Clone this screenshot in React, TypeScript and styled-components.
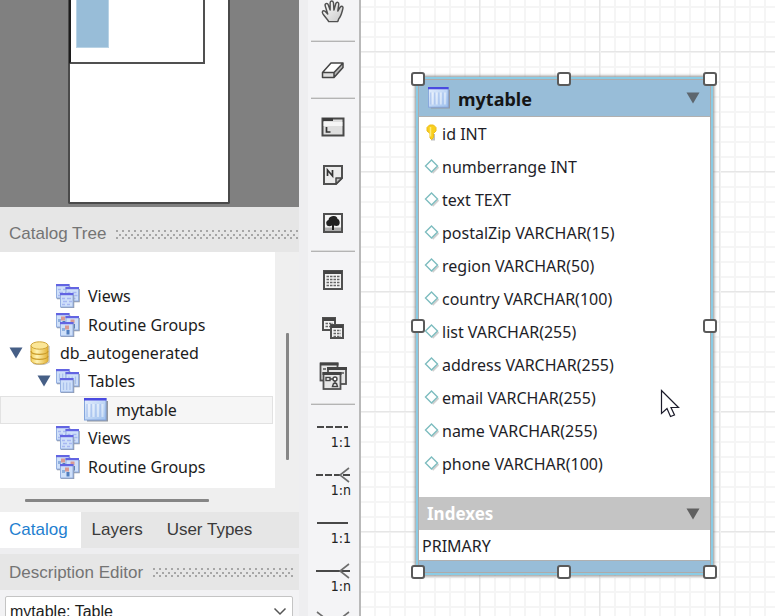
import React from "react";
import styled, { createGlobalStyle, css } from "styled-components";

const uiFont = '"Liberation Sans", Arial, sans-serif';
const treeFont = '"Noto Sans", Tahoma, sans-serif';

const GlobalStyle = createGlobalStyle`
  *, *::before, *::after { box-sizing: border-box; }
  body { margin: 0; background: #eeeef0; font-family: ${uiFont}; font-size: 17px; color: #1c1c1c; }
  ul { margin: 0; padding: 0; list-style: none; }
  button { border: 0; padding: 0; margin: 0; background: none; font: inherit; color: inherit; }
  svg { display: block; flex: none; }
`;

/* ---------- shell ---------- */

const Shell = styled.div`
  display: flex;
  height: 100vh;
  overflow: hidden;
`;

const Sidebar = styled.aside`
  flex: none;
  width: 299px;
  display: flex;
  flex-direction: column;
  overflow: hidden;
`;

/* ---------- overview ---------- */

const Overview = styled.section`
  flex: none;
  display: flex;
  justify-content: center;
  height: 207px;
  padding: 0 2px 3px 0;
  background: #808080;
`;

const OverviewPage = styled.div`
  width: 162px;
  border: 2px solid #4a4a4a;
  border-top: 0;
  border-radius: 0 0 2px 2px;
  background: #fff;
`;

const OverviewViewport = styled.div`
  width: 136px;
  height: 64px;
  margin-left: -1px;
  padding-left: 5px;
  border: 2px solid #505050;
  border-top: 0;
  border-left-color: #1c1c1c;
`;

const OverviewFigure = styled.div`
  width: 33px;
  height: 48px;
  background: #98bdd8;
  border: 1px solid #b9d3e5;
  border-top: 0;
`;

/* ---------- panel headers ---------- */

const PanelHeader = styled.header<{ $tall?: boolean }>`
  flex: none;
  display: flex;
  align-items: center;
  gap: 10px;
  height: ${(p) => (p.$tall ? 45 : 36)}px;
  padding-left: 9px;
  padding-top: ${(p) => (p.$tall ? 9 : 1)}px;
  background: #e6e6e6;
  color: #747474;
`;

const PanelTitle = styled.h2`
  margin: 0;
  font-size: 17px;
  font-weight: 400;
  line-height: 20px;
  white-space: nowrap;
`;

const Grip = styled.span<{ $end?: number }>`
  flex: 1;
  height: 9px;
  margin-right: ${(p) => p.$end ?? 0}px;
  background-image: radial-gradient(circle at 1px 1px, #a6a6a6 1px, transparent 1px),
    radial-gradient(circle at 1px 1px, #a6a6a6 1px, transparent 1px);
  background-size: 6px 7px;
  background-position: 0 0, 3px 4px;
`;

/* ---------- catalog tree ---------- */

const TreeArea = styled.div`
  flex: none;
  display: grid;
  grid-template-columns: 1fr 24px;
  grid-template-rows: 236px 24px;
  background: #efefef;
`;

const TreeList = styled.ul`
  display: grid;
  grid-auto-rows: 1fr;
  padding: 30px 2px 7px 0;
  background: #fff;
  font-family: ${treeFont};
  font-size: 16px;
`;

const TreeRow = styled.li<{ $level: number; $selected?: boolean }>`
  display: flex;
  align-items: center;
  padding-left: ${(p) => 8 + p.$level * 28}px;
  line-height: 24px;
  white-space: nowrap;
  ${(p) =>
    p.$selected &&
    css`
      background: #f6f6f6;
      box-shadow: inset 0 0 0 1px #e2e2e2;
    `}
`;

const Expander = styled.button`
  flex: none;
  display: grid;
  place-items: center;
  width: 16px;
  height: 24px;
`;

const Leaf = styled.span`
  flex: none;
  width: 16px;
`;

const TreeIcon = styled.span`
  flex: none;
  display: grid;
  place-items: center;
  width: 24px;
  margin: 0 8px 0 4px;
`;

const VScroll = styled.div`
  padding: 81px 0 28px 11px;
`;

const HScroll = styled.div`
  padding: 11px 66px 0 25px;
`;

const Thumb = styled.div<{ $vertical?: boolean }>`
  width: ${(p) => (p.$vertical ? "3px" : "100%")};
  height: ${(p) => (p.$vertical ? "100%" : "3px")};
  border-radius: 1px;
  background: #868686;
`;

/* ---------- tabs ---------- */

const Tabs = styled.div`
  flex: none;
  display: flex;
  height: 36px;
  margin-bottom: 6px;
  background: #e6e6e6;
`;

const Tab = styled.button<{ $active?: boolean }>`
  padding: 0 13px 0 ${(p) => (p.$active ? 9 : 11)}px;
  background: ${(p) => (p.$active ? "#fff" : "transparent")};
  color: ${(p) => (p.$active ? "#1f7fd0" : "#3a3a3a")};
`;

const Editor = styled.div`
  flex: none;
  position: relative;
  padding: 6px 6px 6px 5px;
  background: #f2f2f4;
`;

const ObjectSelect = styled.select`
  display: block;
  width: 100%;
  height: 32px;
  padding: 0 24px 0 4px;
  appearance: none;
  border: 1px solid #c4c4c4;
  border-radius: 2px;
  background: #fff;
  color: #1c1c1c;
  font: 16px/30px ${uiFont};
`;

const SelectArrow = styled.svg`
  position: absolute;
  right: 12px;
  top: 17px;
  pointer-events: none;
`;

/* ---------- toolbar ---------- */

const Toolbar = styled.nav`
  flex: none;
  display: flex;
  flex-direction: column;
  width: 53px;
  margin-left: 9px;
  padding: 0 4px 0 3px;
  background: #f4f4f6;
  border-right: 2px solid #b9b9b9;
  overflow: hidden;
`;

const ToolGroup = styled.div<{ $clipped?: boolean }>`
  flex: none;
  display: flex;
  flex-direction: column;
  margin-top: ${(p) => (p.$clipped ? -12 : 0)}px;
  & + & {
    margin-top: 4px;
    padding-top: 4px;
    border-top: 1px solid #b4b4b4;
    box-shadow: 0 -1px 0 #dcdcdc;
  }
  &:nth-child(2) {
    margin-top: 5px;
  }
`;

const Tool = styled.button`
  display: flex;
  flex-direction: column;
  align-items: center;
  justify-content: center;
  height: 48px;
`;

const RelationTool = styled(Tool)`
  justify-content: flex-start;
  padding-top: 10px;
`;

const ToolLabel = styled.span`
  align-self: flex-end;
  padding-right: 4px;
  font: 14px/14px "DejaVu Sans Condensed", "DejaVu Sans", sans-serif;
  color: #222;
`;

/* ---------- diagram ---------- */

const Canvas = styled.main`
  position: relative;
  flex: 1;
  min-width: 0;
  overflow: hidden;
  background-color: #fff;
  background-image: linear-gradient(90deg, #e6e6e6 1px, #f1f1f1 1px, #f1f1f1 2px, transparent 2px),
    linear-gradient(#e6e6e6 1px, #f1f1f1 1px, #f1f1f1 2px, transparent 2px),
    linear-gradient(90deg, #f5f5f5 2px, transparent 2px),
    linear-gradient(#f5f5f5 2px, transparent 2px);
  background-size: 120px 120px, 120px 120px, 15px 15px, 15px 15px;
  background-position: 118px 0, 0 51px, 13px 0, 0 6px;
`;

const Entity = styled.article`
  position: absolute;
  left: 55px;
  top: 77px;
  width: 297px;
  border: 2px solid #8acbe4;
  background: #98bdd8;
  box-shadow: 0 0 3px 1px #8c8c8c;
`;

const EntityBody = styled.div`
  border: 1px solid #aeaaaa;
  padding-bottom: 11px;
`;

const EntityHeader = styled.header`
  display: flex;
  align-items: center;
  height: 37px;
  padding: 0 10px 0 9px;
  gap: 8px;
  border-bottom: 1px solid #b0b0b0;
`;

const EntityName = styled.h1`
  flex: 1;
  margin: 0;
  padding-top: 2px;
  font: 700 18px/24px ${treeFont};
  color: #151515;
`;

const Columns = styled.ul`
  padding-bottom: 17px;
  background: #fff;
`;

const Column = styled.li`
  display: flex;
  align-items: center;
  gap: 2px;
  height: 33px;
  padding-left: 5px;
  font: 16px/24px ${treeFont};
  color: #1e1e28;
  white-space: nowrap;
`;

const IndexHeader = styled.header`
  display: flex;
  align-items: center;
  justify-content: space-between;
  height: 33px;
  padding: 0 10px 0 8px;
  background: #c4c4c4;
`;

const IndexTitle = styled.h2`
  margin: 0;
  font: 700 17px/24px ${treeFont};
  color: #fff;
`;

const IndexRow = styled.li`
  height: 31px;
  padding: 1px 0 0 3px;
  background: #fff;
  border-bottom: 1px solid #b0b0b0;
  font: 16px/30px ${treeFont};
  color: #1e1e28;
`;

const HandleFrame = styled.div`
  position: absolute;
  inset: 0 1px 1px 0;
`;

const Handle = styled.span<{ $x: number; $y: number }>`
  position: absolute;
  left: ${(p) => p.$x}%;
  top: ${(p) => p.$y}%;
  width: 14px;
  height: 14px;
  margin: -7px;
  border: 2px solid #5a5a5a;
  border-radius: 3px;
  background: #fff;
`;

const Pointer = styled.svg`
  position: absolute;
  left: 299px;
  top: 389px;
`;

/* ---------- icons ---------- */

const Triangle = ({ color }: { color: string }) => (
  <svg width="14" height="12" viewBox="0 0 14 12">
    <path d="M0.5 0.5H13.5L7 11.5Z" fill={color} />
  </svg>
);

const TableIcon = ({ size = 24 }: { size?: number }) => (
  <svg width={size} height={size} viewBox="0 0 24 24">
    <defs>
      <linearGradient id="tbl" x1="0" y1="0" x2="1" y2="1">
        <stop offset="0" stopColor="#e6effd" />
        <stop offset="1" stopColor="#9fc1ee" />
      </linearGradient>
    </defs>
    <path d="M3 22.500H23V3" fill="none" stroke="#9297a0" strokeWidth="2" />
    <rect x="0.500" y="0.500" width="21.500" height="21.500" fill="url(#tbl)" stroke="#84a5dc" />
    <path d="M0 0H22.500V2.500H0Z" fill="#4a4ae0" />
    <path d="M5 6V19M9.500 6V19M14 6V19M18.500 6V19" stroke="#fff" strokeOpacity="0.450" strokeWidth="2" />
    <path d="M3 6V19M7.300 6V19M11.800 6V19M16.300 6V19" stroke="#a9c2ee" />
  </svg>
);

type StackKind = "views" | "routines" | "tables";

const MiniWindow = ({ x, y, kind }: { x: number; y: number; kind: StackKind }) => (
  <g transform={`translate(${x} ${y})`}>
    <path d="M1 14.500H13.500V2" fill="none" stroke="#8e96a4" strokeWidth="1.500" />
    <rect x="0.500" y="0.500" width="12.500" height="13.500" fill="#cfe0f9" stroke="#93aee0" />
    <path d="M0 0H13.500V2.200H0Z" fill="#6264e2" />
    {kind === "views" && (
      <path d="M2 5.500H5M7 5.500H11M3 8.500H7M9 8.500H12M2 11.500H5M7 11.500H10" stroke="#a7b7f2" strokeWidth="1.300" />
    )}
    {kind === "tables" && (
      <path d="M3.500 4.500V12M6.700 4.500V12M10 4.500V12" stroke="#a9c1ec" strokeWidth="1.200" />
    )}
    {kind === "routines" && (
      <>
        <rect x="5" y="3.500" width="4" height="4" fill="#d99a94" />
        <rect x="2" y="6" width="3" height="3" fill="#8fb0de" />
        <rect x="6.500" y="8" width="3" height="4.500" fill="#4f7cbe" />
      </>
    )}
  </g>
);

const StackIcon = ({ kind }: { kind: StackKind }) => (
  <svg width="24" height="24" viewBox="0 0 24 24">
    <MiniWindow x={0} y={0} kind={kind} />
    <MiniWindow x={9.5} y={3} kind={kind} />
    <MiniWindow x={4} y={9} kind={kind} />
  </svg>
);

const DatabaseIcon = () => (
  <svg width="20" height="24" viewBox="0 0 20 24">
    <defs>
      <linearGradient id="db" x1="0" x2="1">
        <stop offset="0" stopColor="#f3cf5a" />
        <stop offset="0.350" stopColor="#fff3b4" />
        <stop offset="1" stopColor="#e3b235" />
      </linearGradient>
    </defs>
    <path d="M3 22C8 24.500 15 24 19 21V5" fill="none" stroke="#c4c4c4" strokeWidth="1.500" />
    <path d="M1 4.500V19.500C1 21.500 5 23 9.500 23S18 21.500 18 19.500V4.500Z" fill="url(#db)" stroke="#d0a53a" />
    <ellipse cx="9.500" cy="4.500" rx="8.500" ry="3.700" fill="#fbe697" stroke="#d0a53a" />
    <path d="M1 10C1 12 5 13.300 9.500 13.300S18 12 18 10M1 15C1 17 5 18.300 9.500 18.300S18 17 18 15" fill="none" stroke="#c99b2b" strokeWidth="1.200" />
  </svg>
);

const KeyIcon = () => (
  <svg width="16" height="20" viewBox="0 0 16 20">
    <path d="M7 15.500H10V10" fill="none" stroke="#bdbdbd" strokeWidth="2" />
    <path d="M5.500 1H9.500L12 3.500V7L9.500 9.500V13.500L7.500 15.500L6 14V9.500L3 7V3.500Z" fill="#f9cf1e" stroke="#ecbc1c" />
    <path d="M6.500 3V12.500" stroke="#fdea7c" strokeWidth="1.500" />
  </svg>
);

const DiamondIcon = () => (
  <svg width="16" height="20" viewBox="0 0 16 20">
    <path d="M8.500 16L14.500 10" stroke="#d0d0d0" strokeWidth="2" />
    <path d="M7.500 3L13.500 9L7.500 15L1.500 9Z" fill="#fff" stroke="#7dbcbf" strokeWidth="1.400" />
  </svg>
);

const HandIcon = () => (
  <svg width="24" height="24" viewBox="1 1 25 25">
    <defs>
      <linearGradient id="hand" x1="0" y1="0" x2="1" y2="1">
        <stop offset="0" stopColor="#fff" />
        <stop offset="1" stopColor="#c9c9c9" />
      </linearGradient>
    </defs>
    <path
      d="M9 23.500C8 21.500 5 18.500 3 15.500C1.500 13 3 11.500 5 12.500L8 15.500L5.500 7.500C4.500 4.500 7.500 3.500 8.500 6L10.500 11.500L10.500 4C10.500 1.500 13.500 1.500 14 4L14.500 11.500L16.500 4.500C17.500 2.500 19.800 3.300 19.500 5.500L18.500 12.500L21 8.500C22.500 6.500 24.500 7.800 23.800 10C22.800 13.500 22 18 19.500 20.500L18.500 23.500Z"
      fill="url(#hand)"
      stroke="#505050"
      strokeWidth="1.500"
      strokeLinejoin="round"
    />
  </svg>
);

const EraserIcon = () => (
  <svg width="24" height="18" viewBox="0 0 24 18">
    <path d="M1.500 11.500L10 2H22L13 11.500Z" fill="#fff" />
    <path d="M13 11.500L22 2V6.500L13 16.500Z" fill="#b5b5b5" />
    <path d="M1.500 11.500H13V16.500H1.500Z" fill="#dedede" />
    <path d="M1.500 11.500L10 2H22V6.500L13 16.500H1.500ZM1.500 11.500H13V16.500M13 11.500L22 2" fill="none" stroke="#444" strokeWidth="1.500" strokeLinejoin="round" />
  </svg>
);

const LayerIcon = () => (
  <svg width="24" height="20" viewBox="0 0 24 20">
    <rect x="1.500" y="1.500" width="21" height="17" fill="#dedede" stroke="#484848" strokeWidth="2" />
    <path d="M2 1H12V4H2Z" fill="#3c3c3c" />
    <path d="M2.500 5H21.500V9H2.500Z" fill="#fff" fillOpacity="0.700" />
    <path d="M5.500 10V15H9.500" fill="none" stroke="#333" strokeWidth="1.700" />
  </svg>
);

const NoteIcon = () => (
  <svg width="20" height="20" viewBox="0 0 20 20">
    <path d="M1 1H19V13L13 19H1Z" fill="#ececec" stroke="#505050" strokeWidth="2" />
    <path d="M13 19V13H19Z" fill="#bdbdbd" stroke="#484848" strokeWidth="1.500" strokeLinejoin="round" />
    <path d="M4.500 11V5L9.500 11V5" fill="none" stroke="#333" strokeWidth="1.700" />
  </svg>
);

const ImageIcon = () => (
  <svg width="20" height="20" viewBox="0 0 20 20">
    <rect x="1" y="1" width="18" height="18" fill="#f5f5f5" stroke="#505050" strokeWidth="2" />
    <path d="M2 14.500H18V18H2Z" fill="#adadad" />
    <path d="M10 3C13 2.500 14.500 4.500 14.500 6C17 6.500 17.500 11 15.500 12.500C13.500 13.500 12 12.500 11 12.500V17H9V12.500C7 13.500 4 13.500 3.500 11.500C2.500 9 4 7.500 5.500 7C5.500 5 7.500 3.200 10 3Z" fill="#222" />
  </svg>
);

const GridTable = ({ x = 0, y = 0, w = 20, h = 20 }) => (
  <g transform={`translate(${x} ${y})`}>
    <rect x="1" y="1" width={w - 2} height={h - 2} fill="#f3f3f3" stroke="#505050" strokeWidth="2" />
    <path d={`M1 2.500H${w - 1}`} stroke="#444" strokeWidth="3" />
    <path
      d={`M3.500 6.500H${w - 3}M3.500 9.500H${w - 3}${h > 14 ? `M3.500 12.500H${w - 3}` : ""}${h > 18 ? `M3.500 15.500H${w - 3}` : ""}`}
      stroke="#666"
      strokeWidth="1.400"
      strokeDasharray="2.500 1"
    />
  </g>
);

const NewTableIcon = () => (
  <svg width="20" height="20" viewBox="0 0 20 20">
    <GridTable />
  </svg>
);

const NewViewIcon = () => (
  <svg width="22" height="22" viewBox="0 0 22 22">
    <GridTable x={0} y={0} w={14} h={14} />
    <GridTable x={8} y={7} w={14} h={15} />
  </svg>
);

const NewRoutineIcon = () => (
  <svg width="28" height="28" viewBox="0 0 28 28">
    <g fill="#e6e6e6" stroke="#505050" strokeWidth="1.800">
      <rect x="1.500" y="1.500" width="17" height="17" />
      <rect x="9" y="6" width="18" height="16" />
      <rect x="4.500" y="11" width="17" height="16" />
    </g>
    <path d="M1 2H19.500M8 6.500H28M3.500 11.500H22.500" stroke="#444" strokeWidth="2.800" />
    <path d="M4 7H7M22 11H25" stroke="#555" strokeWidth="1.500" />
    <g fill="#fff" stroke="#444" strokeWidth="1.400">
      <rect x="7" y="15.500" width="4" height="3" />
      <circle cx="16" cy="17" r="2" />
      <path d="M11 17H14M16 19V21" />
      <path d="M13.500 24.500L14.500 21.500H17.500L18.500 24.500Z" />
    </g>
  </svg>
);

const RelationIcon = ({ dashed, many }: { dashed?: boolean; many?: boolean }) => (
  <svg width="36" height="16" viewBox="0 0 36 16">
    <path d={many ? "M1 8H35" : "M2 8H33"} stroke="#484848" strokeWidth="2" strokeDasharray={dashed ? "7 2" : undefined} />
    {many && <path d="M34 1L25 8L34 15" fill="none" stroke="#6e6e6e" strokeWidth="1.600" />}
  </svg>
);

/* ---------- data ---------- */

const columns = [
  "id INT",
  "numberrange INT",
  "text TEXT",
  "postalZip VARCHAR(15)",
  "region VARCHAR(50)",
  "country VARCHAR(100)",
  "list VARCHAR(255)",
  "address VARCHAR(255)",
  "email VARCHAR(255)",
  "name VARCHAR(255)",
  "phone VARCHAR(100)",
];

const handles = [
  [0, 0], [50, 0], [100, 0],
  [0, 50], [100, 50],
  [0, 100], [50, 100], [100, 100],
];

interface TreeNode {
  label: string;
  level: number;
  icon: React.ReactNode;
  open?: boolean;
  selected?: boolean;
}

const tree: TreeNode[] = [
  { label: "Views", level: 1, icon: <StackIcon kind="views" /> },
  { label: "Routine Groups", level: 1, icon: <StackIcon kind="routines" /> },
  { label: "db_autogenerated", level: 0, icon: <DatabaseIcon />, open: true },
  { label: "Tables", level: 1, icon: <StackIcon kind="tables" />, open: true },
  { label: "mytable", level: 2, icon: <TableIcon />, selected: true },
  { label: "Views", level: 1, icon: <StackIcon kind="views" /> },
  { label: "Routine Groups", level: 1, icon: <StackIcon kind="routines" /> },
];

export default function App() {
  return (
    <Shell>
      <GlobalStyle />
      <Sidebar>
        <Overview aria-label="Model overview">
          <OverviewPage>
            <OverviewViewport>
              <OverviewFigure />
            </OverviewViewport>
          </OverviewPage>
        </Overview>

        <PanelHeader $tall>
          <PanelTitle>Catalog Tree</PanelTitle>
          <Grip />
        </PanelHeader>
        <TreeArea>
          <TreeList role="tree" aria-label="Catalog Tree">
            {tree.map((node, i) => (
              <TreeRow
                key={i}
                role="treeitem"
                aria-level={node.level + 1}
                aria-selected={!!node.selected}
                aria-expanded={node.open}
                $level={node.level}
                $selected={node.selected}
              >
                {node.open ? (
                  <Expander aria-label={`Collapse ${node.label}`}>
                    <Triangle color="#465f86" />
                  </Expander>
                ) : (
                  <Leaf />
                )}
                <TreeIcon>{node.icon}</TreeIcon>
                {node.label}
              </TreeRow>
            ))}
          </TreeList>
          <VScroll>
            <Thumb $vertical />
          </VScroll>
          <HScroll>
            <Thumb />
          </HScroll>
        </TreeArea>

        <Tabs role="tablist">
          <Tab role="tab" aria-selected $active>Catalog</Tab>
          <Tab role="tab" aria-selected={false}>Layers</Tab>
          <Tab role="tab" aria-selected={false}>User Types</Tab>
        </Tabs>

        <PanelHeader>
          <PanelTitle id="description-title">Description Editor</PanelTitle>
          <Grip $end={6} />
        </PanelHeader>
        <Editor>
          <ObjectSelect aria-labelledby="description-title" defaultValue="mytable">
            <option value="mytable">mytable: Table</option>
          </ObjectSelect>
          <SelectArrow width="14" height="9" viewBox="0 0 14 9">
            <path d="M1.500 1.500L7 7L12.500 1.500" fill="none" stroke="#555" strokeWidth="1.500" />
          </SelectArrow>
        </Editor>
      </Sidebar>

      <Toolbar aria-label="Diagram tools">
        <ToolGroup $clipped>
          <Tool aria-label="Pan"><HandIcon /></Tool>
        </ToolGroup>
        <ToolGroup>
          <Tool aria-label="Erase"><EraserIcon /></Tool>
        </ToolGroup>
        <ToolGroup>
          <Tool aria-label="Layer"><LayerIcon /></Tool>
          <Tool aria-label="Note"><NoteIcon /></Tool>
          <Tool aria-label="Image"><ImageIcon /></Tool>
        </ToolGroup>
        <ToolGroup>
          <Tool aria-label="Table"><NewTableIcon /></Tool>
          <Tool aria-label="View"><NewViewIcon /></Tool>
          <Tool aria-label="Routine group"><NewRoutineIcon /></Tool>
        </ToolGroup>
        <ToolGroup>
          <RelationTool><RelationIcon dashed /><ToolLabel>1:1</ToolLabel></RelationTool>
          <RelationTool><RelationIcon dashed many /><ToolLabel>1:n</ToolLabel></RelationTool>
          <RelationTool><RelationIcon /><ToolLabel>1:1</ToolLabel></RelationTool>
          <RelationTool><RelationIcon many /><ToolLabel>1:n</ToolLabel></RelationTool>
          <RelationTool aria-label="Many to many">
            <svg width="36" height="34" viewBox="0 0 36 34">
              <path d="M1 8H35M2 1L11 8L2 15M34 1L25 8L34 15" fill="none" stroke="#6e6e6e" strokeWidth="1.600" />
            </svg>
          </RelationTool>
        </ToolGroup>
      </Toolbar>

      <Canvas>
        <Entity>
          <EntityBody>
            <EntityHeader>
              <TableIcon size={22} />
              <EntityName>mytable</EntityName>
              <button aria-label="Collapse mytable"><Triangle color="#5d666e" /></button>
            </EntityHeader>
            <Columns>
              {columns.map((column, i) => (
                <Column key={column}>
                  {i === 0 ? <KeyIcon /> : <DiamondIcon />}
                  {column}
                </Column>
              ))}
            </Columns>
            <IndexHeader>
              <IndexTitle>Indexes</IndexTitle>
              <button aria-label="Collapse indexes"><Triangle color="#606060" /></button>
            </IndexHeader>
            <ul>
              <IndexRow>PRIMARY</IndexRow>
            </ul>
          </EntityBody>
          <HandleFrame>
            {handles.map(([x, y]) => (
              <Handle key={`${x}-${y}`} $x={x} $y={y} />
            ))}
          </HandleFrame>
        </Entity>
        <Pointer width="20" height="30" viewBox="0 0 20 30">
          <path d="M1.500 1.500V24.500L7 19.500L10.500 27.500L14.500 26L11 18.500H18.500Z" fill="#fff" stroke="#1b1b2a" strokeWidth="1.200" />
        </Pointer>
      </Canvas>
    </Shell>
  );
}
